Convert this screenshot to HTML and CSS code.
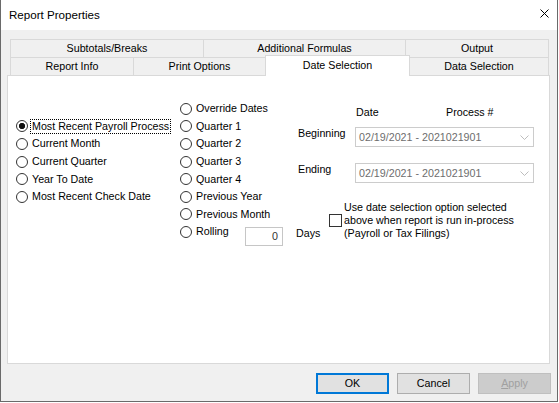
FILE: index.html
```html
<!DOCTYPE html>
<html>
<head>
<meta charset="utf-8">
<link rel="stylesheet" href="styles.css">
</head>
<body>
<div class="window">
  <div class="titlebar">
    <span class="title">Report Properties</span>
    <svg class="close" width="9" height="9" viewBox="0 0 9 9"><path d="M0.5 0.5L8.5 8.5M8.5 0.5L0.5 8.5" stroke="#000" stroke-width="1" fill="none"/></svg>
  </div>
  <div class="client">
    <div class="tabrow">
      <div class="tab t-sub">Subtotals/Breaks</div>
      <div class="tab t-add">Additional Formulas</div>
      <div class="tab t-out">Output</div>
    </div>
    <div class="tabrow front">
      <div class="tab t-info">Report Info</div>
      <div class="tab t-print">Print Options</div>
      <div class="tab t-date selected">Date Selection</div>
      <div class="tab t-data">Data Selection</div>
    </div>
    <div class="panel">
      <div class="col-left">
        <div class="opt"><span class="radio checked"></span><span class="lbl focus">Most Recent Payroll Process</span></div>
        <div class="opt"><span class="radio"></span><span class="lbl">Current Month</span></div>
        <div class="opt"><span class="radio"></span><span class="lbl">Current Quarter</span></div>
        <div class="opt"><span class="radio"></span><span class="lbl">Year To Date</span></div>
        <div class="opt"><span class="radio"></span><span class="lbl">Most Recent Check Date</span></div>
      </div>
      <div class="col-mid">
        <div class="opt"><span class="radio"></span><span class="lbl">Override Dates</span></div>
        <div class="opt"><span class="radio"></span><span class="lbl">Quarter 1</span></div>
        <div class="opt"><span class="radio"></span><span class="lbl">Quarter 2</span></div>
        <div class="opt"><span class="radio"></span><span class="lbl">Quarter 3</span></div>
        <div class="opt"><span class="radio"></span><span class="lbl">Quarter 4</span></div>
        <div class="opt"><span class="radio"></span><span class="lbl">Previous Year</span></div>
        <div class="opt"><span class="radio"></span><span class="lbl">Previous Month</span></div>
        <div class="opt"><span class="radio"></span><span class="lbl rolling">Rolling</span><span class="num">0</span></div>
      </div>
      <div class="col-right">
        <div class="hdr"><span class="h-date">Date</span><span class="h-proc">Process #</span></div>
        <div class="frow first"><span class="flbl">Beginning</span>
          <div class="combo"><span>02/19/2021 - 2021021901</span><svg width="9" height="5" viewBox="0 0 9 5"><path d="M0.5 0.5L4.5 4.5L8.5 0.5" stroke="#bdbdbd" fill="none"/></svg></div>
        </div>
        <div class="frow second"><span class="flbl">Ending</span>
          <div class="combo"><span>02/19/2021 - 2021021901</span><svg width="9" height="5" viewBox="0 0 9 5"><path d="M0.5 0.5L4.5 4.5L8.5 0.5" stroke="#bdbdbd" fill="none"/></svg></div>
        </div>
        <div class="crow">
          <span class="days">Days</span>
          <span class="check"></span>
          <span class="clbl">Use date selection option selected<br>above when report is run in-process<br>(Payroll or Tax Filings)</span>
        </div>
      </div>
    </div>
    <div class="buttons">
      <div class="btn default">OK</div>
      <div class="btn">Cancel</div>
      <div class="btn disabled"><u>A</u>pply</div>
    </div>
  </div>
</div>
</body>
</html>
```
FILE: styles.css
```css
html, body {
  margin: 0;
  padding: 0;
  background: #ffffff;
}
body {
  font-family: "Liberation Sans", Arial, sans-serif;
  font-size: 10.7px;
  color: #000;
}
.window {
  width: 558px;
  height: 402px;
  box-sizing: border-box;
  border-left: 1px solid #6a6a6a;
  border-right: 1px solid #6a6a6a;
  border-bottom: 1px solid #6a6a6a;
  display: flex;
  flex-direction: column;
}
.titlebar {
  height: 30px;
  flex: none;
  background: #fff;
  display: flex;
  justify-content: space-between;
  align-items: flex-start;
  padding: 0 8px 0 8px;
}
.title {
  font-size: 11.6px;
  line-height: 30px;
}
.close {
  margin-top: 9px;
  display: block;
}
.client {
  flex: 1;
  background: #f0f0f0;
  padding-top: 9px;
}
.tabrow {
  display: flex;
  align-items: flex-start;
  margin-left: 9px;
  height: 19px;
}
.tabrow.front {
  margin-top: -1px;
}
.tab {
  box-sizing: border-box;
  height: 19px;
  border: 1px solid #d9d9d9;
  background: #f0f0f0;
  text-align: center;
  line-height: 17px;
  margin-left: -1px;
  white-space: nowrap;
}
.tab:first-child { margin-left: 0; }
.t-sub { width: 194px; }
.t-add { width: 203px; }
.t-out { width: 144px; }
.t-info { width: 124px; }
.t-print { width: 133px; }
.t-date { width: 145px; }
.t-data { width: 140px; }
.tab.selected {
  position: relative;
  z-index: 2;
  background: #fff;
  height: 21px;
  margin-top: -2px;
  border-bottom: none;
  line-height: 18px;
}
.panel {
  margin: -1px 0 0 6px;
  width: 543px;
  height: 289px;
  box-sizing: border-box;
  border: 1px solid #d9d9d9;
  background: #fff;
  display: flex;
  align-items: flex-start;
}
.col-left {
  width: 164px;
  margin-left: 8px;
  padding-top: 41.6px;
  flex: none;
}
.col-mid {
  width: 116px;
  padding-top: 24px;
  flex: none;
}
.col-right {
  flex: 1;
  padding-top: 29.5px;
}
.opt {
  height: 17.6px;
  display: flex;
  align-items: center;
  white-space: nowrap;
}
.radio {
  width: 12px;
  height: 12px;
  box-sizing: border-box;
  border: 1px solid #333;
  border-radius: 50%;
  background: #fff;
  flex: none;
}
.radio.checked {
  background: radial-gradient(circle, #111 0 2.8px, #fff 3.4px);
}
.lbl {
  margin-left: 4px;
  line-height: 13px;
}
.lbl.focus {
  margin-left: 3px;
  padding: 0 1px;
  outline: 1px dotted #000;
  outline-offset: 0;
}
.lbl.rolling {
  width: 49px;
  flex: none;
}
.num {
  align-self: flex-start;
  margin-top: 4px;
  width: 38px;
  height: 19px;
  box-sizing: border-box;
  border: 1px solid #c6c6c6;
  text-align: right;
  padding-right: 4px;
  line-height: 17px;
  color: #333;
  flex: none;
}
.hdr {
  display: flex;
  line-height: 13px;
}
.h-date {
  margin-left: 60px;
  width: 90px;
}
.frow {
  display: flex;
  align-items: flex-start;
}
.frow.first { margin-top: 8.5px; }
.frow.second { margin-top: 16px; }
.flbl {
  margin-left: 2px;
  width: 57px;
  line-height: 13px;
  flex: none;
}
.combo {
  width: 179px;
  height: 20px;
  box-sizing: border-box;
  border: 1px solid #cccccc;
  background: #fff;
  color: #6d6d6d;
  display: flex;
  justify-content: space-between;
  align-items: center;
  padding: 0 4px 0 3px;
}
.combo svg {
  display: block;
  margin-top: 1px;
}
.crow {
  margin-top: 17.5px;
  display: flex;
  align-items: flex-end;
}
.days {
  width: 33px;
  line-height: 13px;
  flex: none;
}
.check {
  align-self: center;
  width: 13px;
  height: 13px;
  box-sizing: border-box;
  border: 1px solid #333;
  background: #fff;
  flex: none;
}
.clbl {
  margin-left: 2px;
  line-height: 13px;
  white-space: nowrap;
}
.buttons {
  display: flex;
  justify-content: flex-end;
  gap: 8px;
  margin-top: 9px;
  padding-right: 6px;
}
.btn {
  width: 73px;
  height: 21px;
  box-sizing: border-box;
  border: 1px solid #adadad;
  background: #e1e1e1;
  text-align: center;
  line-height: 19px;
}
.btn.default {
  border: 2px solid #0078d7;
  line-height: 17px;
}
.btn.disabled {
  background: #cccccc;
  border-color: #bfbfbf;
  color: #a0a0a0;
}
```
